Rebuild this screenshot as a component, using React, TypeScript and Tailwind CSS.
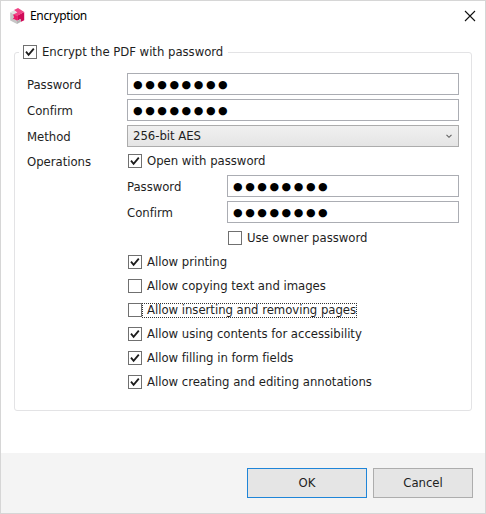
import type { ReactNode } from "react";

function CheckBox({ checked, children, focused = false }: { checked?: boolean; children: ReactNode; focused?: boolean }) {
  return (
    <label className="flex h-6 items-center whitespace-nowrap">
      <span className="block h-[14px] w-[14px] shrink-0 border border-[#707070] bg-white">
        {checked && (
          <svg width="12" height="12" viewBox="0 0 12 12" fill="none" className="block">
            <path d="M2 5.6 4.6 8.8 9.8 2.6" stroke="#1c1c1c" strokeWidth="1.8" />
          </svg>
        )}
      </span>
      <span className={`flex h-[15px] items-center pr-px pb-[2px] pl-[5px] leading-[13px] ${focused ? "outline-1 -outline-offset-1 outline-dotted outline-[#333]" : ""}`}>
        {children}
      </span>
    </label>
  );
}

function PasswordRow({ label }: { label: string }) {
  return (
    <div className="flex h-[22px] items-center">
      <span className="w-[100px] shrink-0 pt-[2px]">{label}</span>
      <div className="flex h-full flex-1 items-center overflow-hidden border border-[#abadb3] bg-white pt-px pl-[5px] font-['DejaVu_Sans',sans-serif] text-[11px] leading-none tracking-[2.55px] text-black">
        ●●●●●●●●
      </div>
    </div>
  );
}

export default function App() {
  return (
    <div className="flex h-[514px] w-[486px] flex-col overflow-hidden border border-[#d6d6d6] bg-white font-['DejaVu_Sans_Condensed','DejaVu_Sans',sans-serif] text-[13px] leading-4 tracking-[-0.03px] text-[#1e1e1e] [font-variant-ligatures:none]">
      <header className="flex h-[29px] shrink-0 items-center justify-between pr-[9px] pl-[9px] font-['Noto_Sans',sans-serif] text-[12px] tracking-[-0.35px] text-black">
        <div className="flex items-center gap-[5px]">
          <svg width="15" height="16" viewBox="0 0 15 16">
            <path d="M.2 4.2 7 7.5V16L.2 12.4Z" fill="#c6c6c6" />
            <path d="m.2 4.2 3.6-1.8L8 4.6 7 7.8Z" fill="#e2e2e2" />
            <path d="m7.2 7.6 7-3.6v8.2l-3.6 1.8V11L7.2 12.8Z" fill="#cf0a58" />
            <path d="M4 2 8 0l6.2 4-7 3.9-4-1.5L7.4 4.6Z" fill="#f04486" />
            <path d="m3 6.4 4.4 1.4v5L4 11l-1.4.2 1.6-2Z" fill="#ed1868" />
            <path d="m7 13 3.6-2v3L7 16Z" fill="#b4b4b4" />
          </svg>
          <span>Encryption</span>
        </div>
        <svg width="12" height="12" viewBox="0 0 12 12">
          <path d="m1 1 10 10M11 1 1 11" stroke="#111" strokeWidth="1.1" />
        </svg>
      </header>

      <section className="mx-[13px] mt-[22px] flex h-[359px] shrink-0 flex-col rounded-[3px] border border-[#e3e3e5] px-3">
        <div className="-mt-[13px] -ml-[8px] flex h-6 w-fit bg-white pr-1 pl-[4px]">
          <CheckBox checked>Encrypt the PDF with password</CheckBox>
        </div>
        <div className="mt-[9px] flex flex-col gap-1">
          <PasswordRow label="Password" />
          <PasswordRow label="Confirm" />
          <div className="flex h-[22px] items-center">
            <span className="w-[100px] shrink-0 pt-[2px]">Method</span>
            <div className="flex h-full flex-1 items-center justify-between border border-[#acacac] bg-linear-to-b from-[#f0f0f0] to-[#e5e5e5] pr-[6px] pl-[5px]">
              <span>256-bit AES</span>
              <svg width="6" height="5" viewBox="0 0 6 5" fill="none">
                <path d="m.5.8 2.5 2.5L5.5.8" stroke="#606060" strokeWidth="1.1" />
              </svg>
            </div>
          </div>
        </div>
        <div className="mt-[2px] flex">
          <span className="w-[101px] shrink-0 pt-px leading-6">Operations</span>
          <div className="flex flex-1 flex-col">
            <CheckBox checked>Open with password</CheckBox>
            <div className="-ml-px mt-[2px] flex flex-col gap-1">
              <PasswordRow label="Password" />
              <PasswordRow label="Confirm" />
            </div>
            <div className="mt-[3px] pl-[100px]">
              <CheckBox>Use owner password</CheckBox>
            </div>
            <CheckBox checked>Allow printing</CheckBox>
            <CheckBox>Allow copying text and images</CheckBox>
            <CheckBox focused>Allow inserting and removing pages</CheckBox>
            <CheckBox checked>Allow using contents for accessibility</CheckBox>
            <CheckBox checked>Allow filling in form fields</CheckBox>
            <CheckBox checked>Allow creating and editing annotations</CheckBox>
          </div>
        </div>
      </section>

      <footer className="mt-auto flex h-[60px] shrink-0 items-center justify-end gap-[6px] bg-[#f4f4f4] pr-3">
        <button className="h-[30px] w-[120px] border border-[#1f85d8] bg-[#e5e5e5]">OK</button>
        <button className="h-[30px] w-[100px] border border-[#adadad] bg-[#e5e5e5]">Cancel</button>
      </footer>
    </div>
  );
}
